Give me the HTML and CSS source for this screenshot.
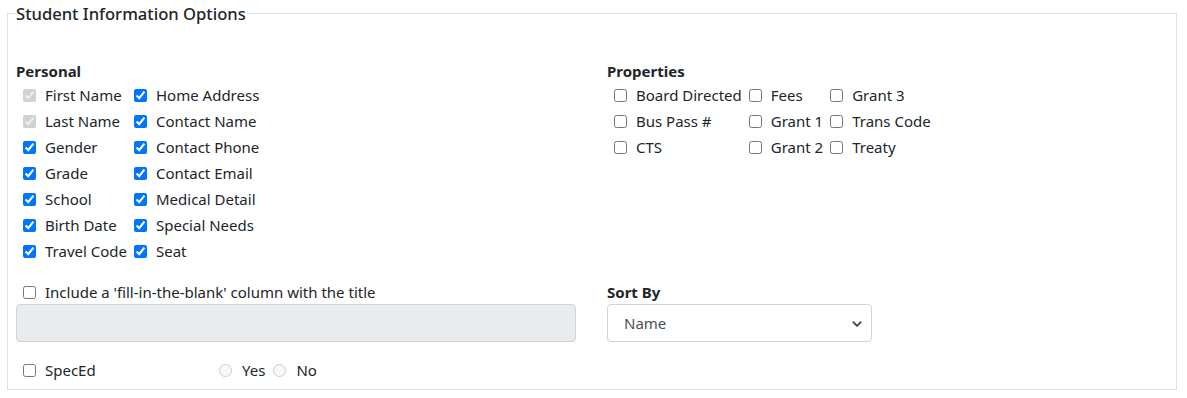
FILE: index.html
```html
<!DOCTYPE html>
<html lang="en">
<head>
    <meta charset="UTF-8">
    <title>Student Information Options</title>
    <link rel="stylesheet" href="styles.css">
</head>
<body>
    <fieldset class="options">
        <legend>Student Information Options</legend>

        <div class="options-grid">
            <div class="group">
                <h4>Personal</h4>
                <div class="check-cols">
                    <div class="check-col">
                        <label class="check"><input type="checkbox" checked disabled> First Name</label>
                        <label class="check"><input type="checkbox" checked disabled> Last Name</label>
                        <label class="check"><input type="checkbox" checked> Gender</label>
                        <label class="check"><input type="checkbox" checked> Grade</label>
                        <label class="check"><input type="checkbox" checked> School</label>
                        <label class="check"><input type="checkbox" checked> Birth Date</label>
                        <label class="check"><input type="checkbox" checked> Travel Code</label>
                    </div>
                    <div class="check-col">
                        <label class="check"><input type="checkbox" checked> Home Address</label>
                        <label class="check"><input type="checkbox" checked> Contact Name</label>
                        <label class="check"><input type="checkbox" checked> Contact Phone</label>
                        <label class="check"><input type="checkbox" checked> Contact Email</label>
                        <label class="check"><input type="checkbox" checked> Medical Detail</label>
                        <label class="check"><input type="checkbox" checked> Special Needs</label>
                        <label class="check"><input type="checkbox" checked> Seat</label>
                    </div>
                </div>
            </div>

            <div class="group">
                <h4>Properties</h4>
                <div class="check-cols">
                    <div class="check-col">
                        <label class="check"><input type="checkbox"> Board Directed</label>
                        <label class="check"><input type="checkbox"> Bus Pass #</label>
                        <label class="check"><input type="checkbox"> CTS</label>
                    </div>
                    <div class="check-col">
                        <label class="check"><input type="checkbox"> Fees</label>
                        <label class="check"><input type="checkbox"> Grant 1</label>
                        <label class="check"><input type="checkbox"> Grant 2</label>
                    </div>
                    <div class="check-col">
                        <label class="check"><input type="checkbox"> Grant 3</label>
                        <label class="check"><input type="checkbox"> Trans Code</label>
                        <label class="check"><input type="checkbox"> Treaty</label>
                    </div>
                </div>
            </div>

            <div class="group second">
                <label class="check short"><input type="checkbox"> Include a 'fill-in-the-blank' column with the title</label>
                <input type="text" class="form-control" disabled>
            </div>

            <div class="group second">
                <h4 class="short">Sort By</h4>
                <div class="select-wrap">
                    <select class="form-select">
                        <option>Name</option>
                        <option>School</option>
                        <option>Grade</option>
                    </select>
                    <svg class="chevron" width="12" height="10" viewBox="0 0 16 16"><path d="M2 5l6 6 6-6" fill="none" stroke="#343a40" stroke-width="2.5" stroke-linecap="round" stroke-linejoin="round"/></svg>
                </div>
            </div>
        </div>

        <div class="spec-row">
            <label class="check spec"><input type="checkbox"> SpecEd</label>
            <label class="radio"><input type="radio" name="speced" disabled> Yes</label>
            <label class="radio"><input type="radio" name="speced" disabled> No</label>
        </div>
    </fieldset>
</body>
</html>
```

FILE: styles.css
```css
body {
    margin: 0;
    font-family: "Noto Sans", "Open Sans", sans-serif;
    font-size: 15px;
    color: #212529;
    background: #fff;
}
.options {
    box-sizing: border-box;
    width: 1170px;
    margin: 0 0 0 7px;
    padding: 33px 8px 6px 8px;
    border: 1px solid #dee2e6;
    min-width: 0;
}
.options legend {
    padding: 0 2px 0 0;
    font-size: 16.6px;
    line-height: 27px;
    font-weight: 500;
}
.options-grid {
    display: grid;
    grid-template-columns: 560px 560px;
    column-gap: 31px;
}
.group h4 {
    margin: 0;
    font-size: 15px;
    font-weight: bold;
    line-height: 22px;
}
.group.second {
    margin-top: 16px;
}
.check-cols {
    display: flex;
    align-items: flex-start;
}
.check-col {
    display: flex;
    flex-direction: column;
}
.check {
    display: flex;
    align-items: center;
    line-height: 26px;
    white-space: nowrap;
}
.check input {
    width: 13px;
    height: 13px;
    margin: 0 9px 0 7px;
}
.check.short,
.group h4.short {
    line-height: 24px;
}
.form-control {
    display: block;
    box-sizing: border-box;
    width: 100%;
    height: 38px;
    margin: 0;
    padding: 6px 12px;
    border: 1px solid #ced4da;
    border-radius: 4px;
    background: #e9ecef;
    font: inherit;
}
.select-wrap {
    position: relative;
    width: 265px;
}
.form-select {
    display: block;
    box-sizing: border-box;
    width: 100%;
    height: 38px;
    margin: 0;
    padding: 6px 30px 6px 16px;
    border: 1px solid #ced4da;
    border-radius: 4px;
    background: #fff;
    color: #495057;
    font: inherit;
    appearance: none;
    -webkit-appearance: none;
}
.chevron {
    position: absolute;
    right: 9px;
    top: 15px;
    pointer-events: none;
}
.spec-row {
    display: flex;
    align-items: center;
    margin-top: 15px;
}
.check.spec {
    width: 201px;
}
.radio {
    display: flex;
    align-items: center;
    line-height: 26px;
    margin-right: 6px;
}
.radio input {
    width: 13px;
    height: 13px;
    margin: 0 10px 0 2px;
}
```
